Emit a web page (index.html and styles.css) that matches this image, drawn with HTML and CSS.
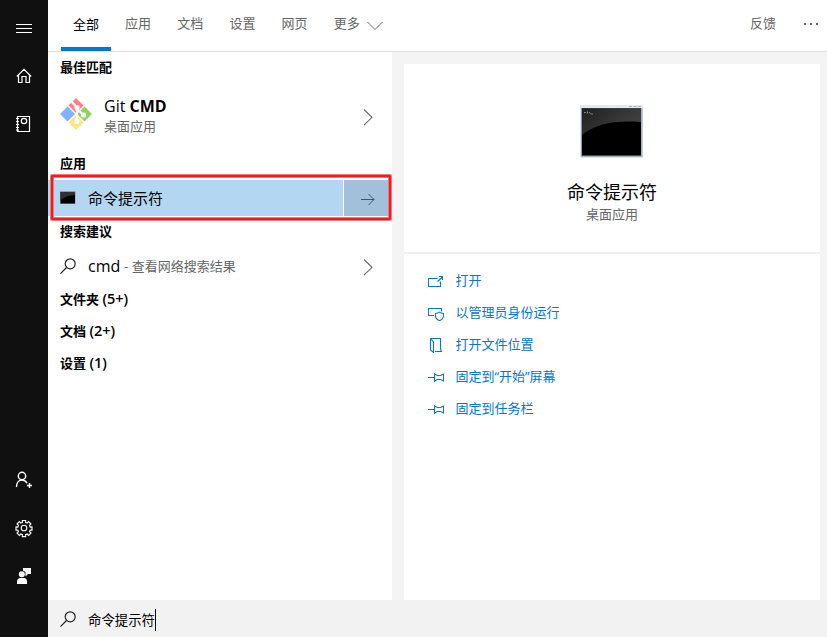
FILE: index.html
```html
<!DOCTYPE html>
<html lang="zh-CN">
<head>
<meta charset="utf-8">
<title>搜索</title>
<link rel="stylesheet" href="styles.css">
</head>
<body>
<div class="app">
  <nav class="rail">
    <svg class="ico" viewBox="0 0 48 48"><path d="M16 24.5h16M16 28.5h16M16 32.5h16"/></svg>
    <svg class="ico" viewBox="0 0 48 48"><path d="M16.800 28.500 24 21.300l7.200 7.200M18.500 27v7.500h3.500v-6h4v6h3.500V27"/></svg>
    <svg class="ico" viewBox="0 0 48 48"><path d="M17.500 20.500h12v15h-12zM16 22.500h3M16 25.500h3M16 28.500h3M16 31.500h3M16 34h3"/><circle cx="24" cy="25" r="2.700"/></svg>
    <div class="spacer"></div>
    <svg class="ico user" viewBox="0 0 48 48"><circle cx="22" cy="20" r="3.700"/><path d="M16.500 31c0-4 2.200-7 5.500-7 2.200 0 4 1.200 5 3.300M29.500 27v5M27 29.500h5"/></svg>
    <svg class="ico gear" viewBox="0 0 48 48"><circle cx="24" cy="24" r="2.800"/><path d="M22.500 18.400 22.300 16.500h3.400l-.2 1.900 1.700.7 1.400-1.500 2.400 2.400-1.500 1.400.7 1.700 1.800-.2v3.300l-1.800-.2-.7 1.700 1.500 1.400-2.400 2.400-1.400-1.500-1.700.7.200 1.900h-3.400l.2-1.900-1.700-.7-1.400 1.500-2.400-2.400 1.500-1.400-.7-1.700-1.800.2v-3.300l1.800.2.700-1.700-1.500-1.400 2.400-2.400 1.400 1.500z"/></svg>
    <svg class="ico solid" viewBox="0 0 48 48"><circle cx="21.800" cy="22.200" r="3"/><path d="M17 32v-2.500c0-2.200 1.600-3.500 3.500-3.500H24c1.800 0 3 1.500 3 3.500V32zM23 16h8v6h-3l-2.500 2.500V20L23 18.500z"/></svg>
  </nav>
  <div class="main">
    <header class="tabs">
      <span class="tab active">全部</span><span class="tab">应用</span><span class="tab">文档</span><span class="tab">设置</span><span class="tab">网页</span><span class="tab more">更多<svg width="16" height="10" viewBox="0 0 16 10"><path d="M.500 1 8 8.500 15.500 1"/></svg></span>
      <span class="feedback">反馈</span>
      <svg class="dots" width="16" height="4" viewBox="0 0 16 4"><path d="M1 1h2v2H1zM7 1h2v2H7zM13 1h2v2h-2z"/></svg>
    </header>
    <div class="content">
      <section class="results">
        <h2>最佳匹配</h2>
        <div class="best">
          <svg class="git" width="34" height="34" viewBox="0 0 34 34">
            <path fill="#ff8080" d="m17 1 7.500 7.500-7.500 7.500-7.500-7.500z"/>
            <path fill="#80b3ff" d="m8.500 9.500 7.500 7.500-7.500 7.500L1 17z"/>
            <path fill="#8dd35f" d="m25.500 9.500L33 17l-7.500 7.500L18 17z"/>
            <path fill="#ffe680" d="m17 18 7.500 7.500L17 33l-7.500-7.500z"/>
            <path stroke="#fff" stroke-width="2.200" d="m12.500 4.500 5.500 6v14M18 12l6.500 6"/>
            <circle fill="#fff" cx="18" cy="10.500" r="2.600"/><circle fill="#fff" cx="24.500" cy="18" r="2.600"/><circle fill="#fff" cx="18" cy="24.500" r="2.600"/>
          </svg>
          <div class="names"><div class="name">Git <b>CMD</b></div><div class="kind">桌面应用</div></div>
          <svg class="chev" width="10" height="18" viewBox="0 0 10 18"><path d="m1 1.500 8 7.800-8 7.800"/></svg>
        </div>
        <h2>应用</h2>
        <div class="selected">
          <div class="hit">
            <svg width="16" height="14" viewBox="0 0 16 14"><path fill="#8e9da8" d="M0 0h15.500v13H0z"/><path fill="#000" d="M.5 1h14.500V12.500H.5z"/><path fill="#303030" d="M.5 1h14.500v3C9 4.500 4 6 .5 9z"/></svg>
            <span>命令提示符</span>
          </div>
          <div class="go"><svg width="14" height="14" viewBox="0 0 14 14"><path d="M0 7.500h13M7.500 2l5.500 5.500L7.500 13"/></svg></div>
          <div class="mark"></div>
        </div>
        <h2>搜索建议</h2>
        <div class="suggest">
          <svg class="lens" width="16" height="17" viewBox="0 0 16 17"><circle cx="10.200" cy="5.800" r="5"/><path d="M6.500 9.500.500 15.700"/></svg>
          <span class="term">cmd</span><span class="hint">- 查看网络搜索结果</span>
          <svg class="chev" width="10" height="18" viewBox="0 0 10 18"><path d="m1 1.500 8 7.800-8 7.800"/></svg>
        </div>
        <h2>文件夹 <span class="count">(5+)</span></h2>
        <h2>文档 <span class="count">(2+)</span></h2>
        <h2>设置 <span class="count">(1)</span></h2>
      </section>
      <section class="detail">
        <div class="hero">
          <svg width="64" height="54" viewBox="0 0 64 54">
            <defs><linearGradient id="shine" x1="0" y1="0" x2="1" y2="0.500"><stop offset="0" stop-color="#202020"/><stop offset="1" stop-color="#424242"/></linearGradient></defs>
            <path fill="#c3ccd7" d="M.5 0h62.500v52.500H.5z"/><path fill="#e4e9ee" d="M1 0h62v3H1z"/>
            <path fill="#8b98a6" d="M1 3h60.500v48.500H1z"/>
            <path fill="#000" d="M2 3.500h59v47h-59z"/>
            <path fill="url(#shine)" d="M2 3.500h59v13.500C35 15 15 19 2 30z"/>
            <path fill="#aab2bb" d="M49 1h3v1h-3zM53.500 1h3v1h-3zM58 1h3v1h-3z"/>
            <path stroke="#888" d="M4 7.500h2M7.500 6.500v2M9 7l1.500 2M11 9h2"/>
          </svg>
          <div class="title">命令提示符</div>
          <div class="kind">桌面应用</div>
        </div>
        <div class="actions">
          <div class="act"><svg viewBox="0 0 16 16"><path d="M9.500 5.500H.500v8h12V8.500M9.500 8.500l5-4.500M11 3.500h3.500V7"/></svg><span>打开</span></div>
          <div class="act"><svg viewBox="0 0 16 16"><path d="M6 10.500H.500v-7h13V6.500M11.500 7.200c-1 .9-2.300 1.300-4 1.300v2.500c0 2 1.500 3.600 4 4.800 2.500-1.200 4-2.800 4-4.800V8.500c-1.700 0-3-.4-4-1.300z"/></svg><span>以管理员身份运行</span></div>
          <div class="act"><svg viewBox="0 0 16 16"><path d="M2.500 1.500h10V12l1 2.500H7M2.500 1.500v11.500l3 2.500V5L2.500 1.500"/></svg><span>打开文件位置</span></div>
          <div class="act"><svg viewBox="0 0 16 16"><path d="M0 8.500h6.500M6.500 4v9M6.500 5l3 1.500h3L15.500 5v7l-3-1.500h-3L6.500 12"/></svg><span>固定到“开始”屏幕</span></div>
          <div class="act"><svg viewBox="0 0 16 16"><path d="M0 8.500h6.500M6.500 4v9M6.500 5l3 1.500h3L15.500 5v7l-3-1.500h-3L6.500 12"/></svg><span>固定到任务栏</span></div>
        </div>
      </section>
    </div>
    <footer class="search">
      <svg class="lens" width="16" height="17" viewBox="0 0 16 17"><circle cx="10.200" cy="5.800" r="5"/><path d="M6.500 9.500.500 15.700"/></svg>
      <span class="query">命令提示符</span><i class="caret"></i>
    </footer>
  </div>
</div>
</body>
</html>
```
FILE: styles.css
```css
* { box-sizing: border-box; }
body { margin: 0; font: 13px/20px "Open Sans", "Noto Sans CJK SC", sans-serif; color: #000; background: #f4f4f4; }
svg { display: block; flex: none; fill: none; }
.app { display: flex; width: 827px; height: 637px; overflow: hidden; }
.rail { width: 48px; flex: none; display: flex; flex-direction: column; background: #101010; padding: 0 0 37px; }
.ico { width: 48px; height: 48px; stroke: #fff; stroke-width: 1.2; }
.ico:first-child { stroke-width: 1; }
.user { stroke-width: 1.4; }
.gear { stroke-width: 1.1; }
.solid { fill: #fff; stroke: none; }
.spacer { flex: 1; }
.main { flex: 1; display: flex; flex-direction: column; min-width: 0; }

.tabs { height: 52px; flex: none; display: flex; align-items: flex-start; background: #fff; border-bottom: 1px solid #e0e0e0; padding: 0 8px 0 12px; color: #666; }
.tab { height: 51px; padding: 13px 13px 0; width: 52.200px; white-space: nowrap; }
.tab.active { width: 50px; margin: 0 1px; padding: 14px 0 0 12px; color: #000; border-bottom: 4px solid #0078d7; }
.tab.more { width: auto; display: flex; gap: 7px; }
.more svg { stroke: #666; margin-top: 8px; }
.feedback { margin: 13px 27px 0 auto; }
.dots { fill: #666; margin-top: 22px; }

.content { flex: 1; display: flex; min-height: 0; }
.results { width: 344px; background: #fff; }
h2 { margin: 0; height: 32px; padding-left: 12px; font-size: 13px; line-height: 30px; font-weight: 700; white-space: nowrap; }
.count { font-size: 14.500px; font-weight: 600; }
.best { height: 64px; display: flex; padding: 12px 19px 0 11px; }
.names { margin: -1px 0 0 11px; flex: 1; }
.git { margin-top: 1px; }
.name { font-size: 16px; line-height: 22px; }
.names .kind { margin-top: -1px; }
.kind { color: #666; line-height: 20px; }
.chev { stroke: #666; stroke-width: 1.1; }
.best .chev { margin-top: 12px; }
.selected { position: relative; height: 36px; display: flex; gap: 1px; font-size: 15px; }
.hit { flex: 1; display: flex; align-items: center; gap: 12px; padding-left: 12px; background: #b3d7f3; }
.go { width: 48px; background: #a2c0da; display: flex; align-items: center; padding-left: 17px; }
.go svg { stroke: #41566a; margin-top: 2px; }
.mark { position: absolute; left: 3px; top: -5px; width: 340px; height: 45px; border: 2px solid #ed1c24; border-radius: 1px; box-shadow: 0 0 0 1px #f5777c, inset 0 0 0 1px #f5777c; }
.suggest { height: 36px; display: flex; align-items: center; padding: 0 19px 0 12px; }
.suggest .chev { margin-top: 2px; }
.lens { stroke: #222; stroke-width: 1.2; }
.term { font-size: 16px; margin-left: 12px; }
.hint { color: #666; margin-left: 4px; flex: 1; }

.detail { width: 416px; margin: 12px 0 0 12px; background: #fff; }
.hero { height: 190px; border-bottom: 2px solid #f0f0f0; display: flex; flex-direction: column; align-items: center; padding-top: 41px; }
.title { font-size: 18px; line-height: 26px; margin-top: 20px; }
.hero .kind { margin-top: -1px; }
.actions { padding: 11px 24px; }
.act { height: 32px; display: flex; align-items: center; gap: 12px; color: #0078d7; }
.act span { margin: -2px 0 0 -0.500px; }
.act svg { width: 16px; height: 16px; stroke: #0078d7; stroke-width: 1.1; }

.search { height: 37px; flex: none; display: flex; align-items: center; padding: 2px 0 0 12px; background: #f2f2f2; }
.query { font-size: 13.400px; margin-left: 12px; }
.caret { width: 1px; height: 22px; background: #000; }
```
